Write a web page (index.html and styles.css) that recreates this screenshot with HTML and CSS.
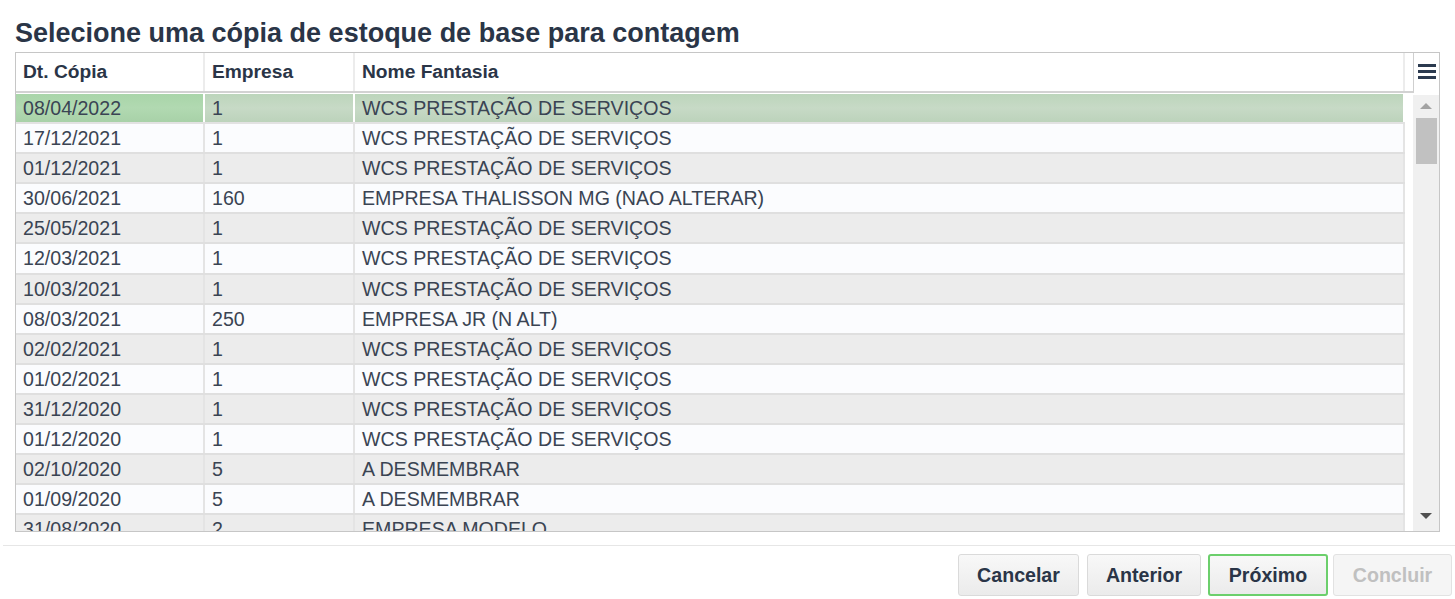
FILE: index.html
```html
<!DOCTYPE html>
<html lang="pt-BR">
<head>
<meta charset="utf-8">
<title>Selecione uma cópia de estoque</title>
<link rel="stylesheet" href="styles.css">
</head>
<body>
<div class="dialog">
  <h1 class="title">Selecione uma cópia de estoque de base para contagem</h1>
  <div class="grid">
    <div class="grid-head">
      <div class="head-cols">
        <div class="hcell c1">Dt. Cópia</div>
        <div class="hcell c2">Empresa</div>
        <div class="hcell c3">Nome Fantasia</div>
      </div>
      <div class="head-menu">
        <svg width="18" height="16" viewBox="0 0 18 16"><rect x="0" y="0" width="18" height="3" fill="#2b3a4f"/><rect x="0" y="6" width="18" height="3" fill="#2b3a4f"/><rect x="0" y="12" width="18" height="3" fill="#2b3a4f"/></svg>
      </div>
    </div>
    <div class="grid-body">
      <div class="rows">
        <div class="row selected"><div class="cell c1">08/04/2022</div><div class="cell c2">1</div><div class="cell c3">WCS PRESTAÇÃO DE SERVIÇOS</div></div>
        <div class="row"><div class="cell c1">17/12/2021</div><div class="cell c2">1</div><div class="cell c3">WCS PRESTAÇÃO DE SERVIÇOS</div></div>
        <div class="row"><div class="cell c1">01/12/2021</div><div class="cell c2">1</div><div class="cell c3">WCS PRESTAÇÃO DE SERVIÇOS</div></div>
        <div class="row"><div class="cell c1">30/06/2021</div><div class="cell c2">160</div><div class="cell c3">EMPRESA THALISSON MG (NAO ALTERAR)</div></div>
        <div class="row"><div class="cell c1">25/05/2021</div><div class="cell c2">1</div><div class="cell c3">WCS PRESTAÇÃO DE SERVIÇOS</div></div>
        <div class="row"><div class="cell c1">12/03/2021</div><div class="cell c2">1</div><div class="cell c3">WCS PRESTAÇÃO DE SERVIÇOS</div></div>
        <div class="row"><div class="cell c1">10/03/2021</div><div class="cell c2">1</div><div class="cell c3">WCS PRESTAÇÃO DE SERVIÇOS</div></div>
        <div class="row"><div class="cell c1">08/03/2021</div><div class="cell c2">250</div><div class="cell c3">EMPRESA JR (N ALT)</div></div>
        <div class="row"><div class="cell c1">02/02/2021</div><div class="cell c2">1</div><div class="cell c3">WCS PRESTAÇÃO DE SERVIÇOS</div></div>
        <div class="row"><div class="cell c1">01/02/2021</div><div class="cell c2">1</div><div class="cell c3">WCS PRESTAÇÃO DE SERVIÇOS</div></div>
        <div class="row"><div class="cell c1">31/12/2020</div><div class="cell c2">1</div><div class="cell c3">WCS PRESTAÇÃO DE SERVIÇOS</div></div>
        <div class="row"><div class="cell c1">01/12/2020</div><div class="cell c2">1</div><div class="cell c3">WCS PRESTAÇÃO DE SERVIÇOS</div></div>
        <div class="row"><div class="cell c1">02/10/2020</div><div class="cell c2">5</div><div class="cell c3">A DESMEMBRAR</div></div>
        <div class="row"><div class="cell c1">01/09/2020</div><div class="cell c2">5</div><div class="cell c3">A DESMEMBRAR</div></div>
        <div class="row"><div class="cell c1">31/08/2020</div><div class="cell c2">2</div><div class="cell c3">EMPRESA MODELO</div></div>
      </div>
      <div class="scrollbar">
        <div class="arrow up"></div>
        <div class="thumb"></div>
        <div class="track-fill"></div>
        <div class="arrow down"></div>
      </div>
    </div>
  </div>
</div>
<div class="footer">
  <button class="btn cancel">Cancelar</button>
  <button class="btn prev">Anterior</button>
  <button class="btn primary">Próximo</button>
  <button class="btn disabled">Concluir</button>
</div>
</body>
</html>
```

FILE: styles.css
```css
* { box-sizing: border-box; }
html, body { margin: 0; padding: 0; background: #fff; }
body {
  font-family: "Liberation Sans", Arial, sans-serif;
  color: #2a3547;
  width: 1455px;
  height: 599px;
  overflow: hidden;
}
.dialog { padding: 17px 15px 0 15px; }
.title {
  margin: 0 0 3px 0;
  font-size: 27px;
  line-height: 32px;
  font-weight: bold;
  color: #2a3547;
  white-space: nowrap;
}
.grid {
  border: 1px solid #c6c6c6;
  height: 480px;
  background: #fff;
  display: flex;
  flex-direction: column;
}
.grid-head { display: flex; height: 40px; flex: none; }
.head-cols {
  flex: 1;
  display: flex;
  border-bottom: 2px solid #d2d2d2;
  border-right: 1px solid #cfcfcf;
}
.hcell {
  font-size: 19.2px;
  font-weight: bold;
  color: #2a3547;
  line-height: 38px;
  padding-left: 7px;
  border-right: 2px solid #ececec;
  white-space: nowrap;
  height: 38px;
}
.head-menu {
  width: 25px;
  flex: none;
  display: flex;
  justify-content: center;
  padding-top: 11px;
}
.c1 { width: 189px; flex: none; }
.c2 { width: 150px; flex: none; }
.c3 { width: 1050px; flex: none; }
.grid-body { display: flex; flex: 1; min-height: 0; }
.rows {
  width: 1389px;
  flex: none;
  overflow: hidden;
  margin-right: 8px;
  padding-top: 1px;
}
.row {
  display: flex;
  height: 30.1px;
  border-bottom: 2px solid #dfdfdf;
  background: #ececec;
}
.row:nth-child(even) { background: #fbfcfe; }
.cell {
  font-size: 19.6px;
  line-height: 28px;
  padding-left: 7px;
  color: #3a4453;
  white-space: nowrap;
  overflow: hidden;
  border-right: 2px solid #e4e4e4;
}
.row.selected {
  background: linear-gradient(to bottom, #bcd5bb, #c7dac6 50%, #bcd3bb);
  border-bottom-color: #e2e2e2;
}
.row.selected .cell { border-right-color: #fff; }
.row.selected .c1 { background: linear-gradient(to bottom, #a9d5a9, #b1d9b1 50%, #a8d1a8); }
.scrollbar {
  width: 26px;
  flex: none;
  margin-top: 2px;
  background: #f0f0f0;
  display: flex;
  flex-direction: column;
  align-items: center;
}
.arrow { width: 0; height: 0; border-left: 6px solid transparent; border-right: 6px solid transparent; }
.arrow.up { border-bottom: 6px solid #a3a3a3; margin-top: 8px; }
.thumb { width: 21px; height: 46px; background: #c1c1c1; margin-top: 9px; }
.track-fill { flex: 1; }
.arrow.down { border-top: 6px solid #505050; margin-bottom: 12px; }
.footer {
  margin: 13px 0 0 3px;
  border-top: 1px solid #e6e6e6;
  padding: 8px 3px 0 0;
  display: flex;
  justify-content: flex-end;
}
.btn {
  font-family: "Liberation Sans", Arial, sans-serif;
  font-size: 19.6px;
  font-weight: bold;
  color: #2a3547;
  height: 42px;
  padding: 0;
  text-align: center;
  border: 1px solid #dadada;
  border-radius: 3px;
  background: linear-gradient(to bottom, #f8f8f8, #ebebeb);
  cursor: pointer;
}
.btn.cancel { width: 121px; margin-right: 8px; }
.btn.prev { width: 114px; margin-right: 7px; }
.btn.primary { width: 120px; border: 2px solid #6ccf6c; margin-right: 5px; }
.btn.disabled { width: 119px; color: #c0c0c0; background: #f5f5f5; border-color: #e2e2e2; }
```
